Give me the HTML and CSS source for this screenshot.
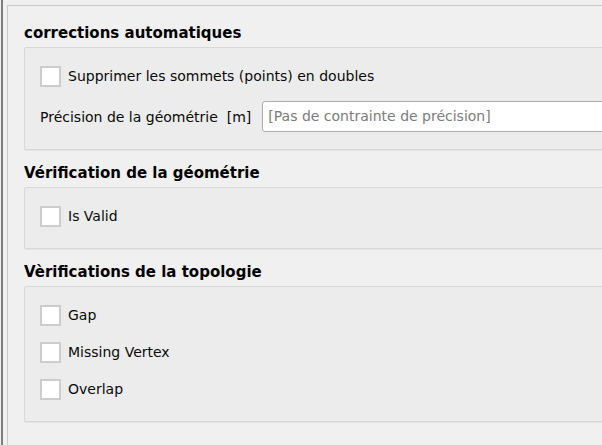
FILE: index.html
```html
<!DOCTYPE html>
<html lang="fr">
<head>
<meta charset="utf-8">
<link rel="stylesheet" href="styles.css">
</head>
<body>
<div class="outer">
  <div class="panel">
    <section class="group">
      <h2 class="title">corrections automatiques</h2>
      <div class="box box-first">
        <label class="check"><span class="cb"></span><span>Supprimer les sommets (points) en doubles</span></label>
        <div class="field">
          <span class="field-label">Précision de la géométrie&nbsp; [m]</span>
          <div class="input">[Pas de contrainte de précision]</div>
        </div>
      </div>
    </section>
    <section class="group">
      <h2 class="title">Vérification de la géométrie</h2>
      <div class="box">
        <label class="check"><span class="cb"></span><span>Is Valid</span></label>
      </div>
    </section>
    <section class="group">
      <h2 class="title">Vèrifications de la topologie</h2>
      <div class="box box-list">
        <label class="check"><span class="cb"></span><span>Gap</span></label>
        <label class="check"><span class="cb"></span><span>Missing Vertex</span></label>
        <label class="check"><span class="cb"></span><span>Overlap</span></label>
      </div>
    </section>
  </div>
</div>
</body>
</html>
```

FILE: styles.css
```css
html, body {
  margin: 0;
  padding: 0;
}
body {
  width: 602px;
  height: 445px;
  overflow: hidden;
  background: #f0f0f0;
  font-family: "DejaVu Sans", Verdana, sans-serif;
  font-size: 14px;
  color: #0a0a0a;
}
.outer {
  height: 445px;
  box-sizing: border-box;
  margin-left: 1px;
  border-left: 2px solid #7d7d7d;
  padding-left: 4px;
  padding-top: 5px;
  overflow: hidden;
}
.panel {
  height: 440px;
  box-sizing: border-box;
  border-left: 1px solid #c9c9c9;
  border-top: 1px solid #c9c9c9;
  padding-left: 16px;
  padding-top: 17px;
  margin-right: -40px;
}
.group {
  margin-bottom: 13px;
}
.title {
  margin: 0 0 4px 0;
  font-size: 15px;
  font-weight: bold;
  line-height: 21px;
  height: 20px;
  color: #000;
}
.box {
  box-sizing: border-box;
  background: #ececec;
  border: 1px solid #d8d8d8;
  border-radius: 2px;
  box-shadow: 0 1px 0 #e4e4e4;
  padding: 18px 15px 21px 15px;
  display: flex;
  flex-direction: column;
  gap: 16px;
}
.box-first {
  gap: 14px;
  padding-bottom: 17px;
}
.check {
  display: flex;
  align-items: center;
  gap: 7px;
  height: 21px;
  line-height: 23px;
}
.cb {
  box-sizing: border-box;
  width: 21px;
  height: 21px;
  background: #fff;
  border: 2px solid #cdcdcd;
  flex: none;
}
.field {
  display: flex;
  align-items: center;
  gap: 11px;
  height: 31px;
}
.field-label {
  white-space: pre;
}
.input {
  flex: 1;
  box-sizing: border-box;
  height: 31px;
  line-height: 29px;
  background: #fff;
  border: 1px solid #acacac;
  border-radius: 3px;
  padding-left: 5px;
  color: #7c7c7c;
}
```
